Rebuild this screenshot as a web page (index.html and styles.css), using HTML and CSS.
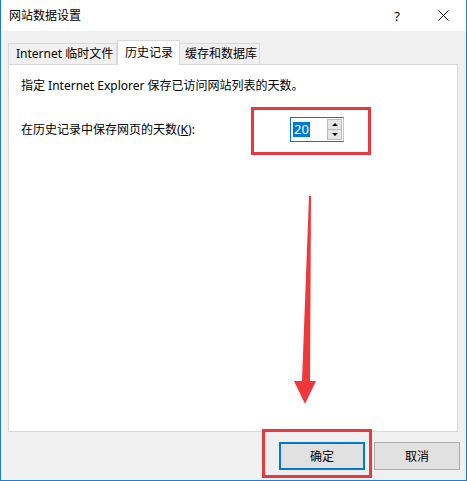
FILE: index.html
```html
<!DOCTYPE html>
<html lang="zh-CN">
<head>
<meta charset="utf-8">
<title>网站数据设置</title>
<link rel="stylesheet" href="styles.css">
</head>
<body>
<div class="window">
  <div class="titlebar">
    <span class="title">网站数据设置</span>
    <span class="capbtn help">?</span>
    <span class="capbtn close"><svg width="11" height="11" viewBox="0 0 11 11"><path d="M0.5 0.5 L10.5 10.5 M10.5 0.5 L0.5 10.5" stroke="#000" stroke-width="1" fill="none"/></svg></span>
  </div>
  <div class="tabs">
    <div class="tab t1">Internet 临时文件</div>
    <div class="tab t2 active">历史记录</div>
    <div class="tab t3">缓存和数据库</div>
  </div>
  <div class="panel">
    <p class="desc">指定 Internet Explorer 保存已访问网站列表的天数。</p>
    <div class="row">
      <label class="lbl">在历史记录中保存网页的天数(<u>K</u>):</label>
      <div class="spin">
        <div class="spin-text"><span class="sel">20</span></div>
        <div class="spin-btns">
          <div class="sb up"><i></i></div>
          <div class="sb down"><i></i></div>
        </div>
      </div>
    </div>
  </div>
  <div class="buttons">
    <button class="btn default">确定</button>
    <button class="btn">取消</button>
  </div>
</div>
<div class="mark box1"></div>
<div class="mark box2"></div>
<svg class="arrow" width="467" height="481" viewBox="0 0 467 481">
  <polygon points="309,196 311,196 310,381 316,381 305,404 294,381 302,381" fill="#f0383a"/>
</svg>
</body>
</html>
```
FILE: styles.css
```css
html, body {
  margin: 0;
  padding: 0;
}
body {
  position: relative;
  width: 467px;
  height: 481px;
  font-family: "Noto Sans", "Noto Sans CJK SC", sans-serif;
  font-size: 12px;
  color: #000;
  background: #f0f0f0;
}
.window {
  box-sizing: border-box;
  width: 467px;
  height: 481px;
  border-left: 1px solid #1a7fd4;
  border-right: 1px solid #1a7fd4;
  border-bottom: 1px solid #1a7fd4;
  background: #f0f0f0;
}
.titlebar {
  height: 31px;
  background: #fff;
  display: flex;
  align-items: center;
  padding-left: 8px;
}
.title {
  flex: 1;
  line-height: 16px;
}
.capbtn {
  width: 46px;
  height: 31px;
  display: flex;
  align-items: center;
  justify-content: center;
}
.help {
  font-size: 13px;
}
.tabs {
  display: flex;
  align-items: flex-end;
  height: 24px;
  margin-top: 9px;
  padding-left: 7px;
  position: relative;
  z-index: 1;
}
.tab {
  box-sizing: border-box;
  height: 21px;
  border: 1px solid #d9d9d9;
  border-bottom: none;
  background: #f0f0f0;
  line-height: 19px;
  padding-left: 7px;
  white-space: nowrap;
}
.tab + .tab {
  border-left: none;
}
.t1 { width: 109px; }
.t2 { width: 63px; }
.t3 { width: 80px; padding-left: 5px; }
.tab.active {
  height: 25px;
  margin-bottom: -1px;
  background: #fff;
  line-height: 23px;
  border-left: 1px solid #d9d9d9;
}
.panel {
  box-sizing: border-box;
  height: 368px;
  margin: 0 8px 0 7px;
  border: 1px solid #d9d9d9;
  background: #fff;
  padding: 13px 12px 0;
}
.desc {
  margin: 0;
  line-height: 16px;
  white-space: nowrap;
}
.row {
  display: flex;
  align-items: center;
  margin-top: 23px;
}
.lbl {
  width: 269px;
  line-height: 16px;
}
.spin {
  box-sizing: border-box;
  width: 54px;
  height: 25px;
  border: 1px solid #0078d7;
  border-right-color: #c4c4c4;
  display: flex;
}
.spin-text {
  flex: 1;
  padding-left: 2px;
  display: flex;
  align-items: center;
}
.sel {
  background: #0078d7;
  color: #fff;
  font-size: 13px;
  line-height: 15px;
  padding: 0 1px;
}
.spin-btns {
  width: 15px;
  margin: 1px 1px 1px 0;
  display: flex;
  flex-direction: column;
}
.sb {
  flex: 1;
  box-sizing: border-box;
  background: #e5e5e5;
  border: 1px solid #bcbcbc;
  display: flex;
  align-items: center;
  justify-content: center;
}
.sb + .sb {
  border-top: none;
}
.sb i {
  width: 0;
  height: 0;
  border-left: 3px solid transparent;
  border-right: 3px solid transparent;
}
.up i { border-bottom: 3px solid #000; }
.down i { border-top: 3px solid #000; }
.buttons {
  display: flex;
  justify-content: flex-end;
  gap: 9px;
  margin-top: 10px;
  padding-right: 6px;
}
.btn {
  box-sizing: border-box;
  width: 86px;
  height: 28px;
  background: #e1e1e1;
  border: 1px solid #adadad;
  font-family: "Noto Sans", "Noto Sans CJK SC", sans-serif;
  font-size: 12px;
  color: #000;
  padding: 0;
}
.btn.default {
  border: 2px solid #0078d7;
}
.mark {
  position: absolute;
  box-sizing: border-box;
  border: 3px solid #e63a40;
}
.box1 {
  left: 251px;
  top: 107px;
  width: 120px;
  height: 48px;
}
.box2 {
  left: 262px;
  top: 429px;
  width: 110px;
  height: 49px;
}
.arrow {
  position: absolute;
  left: 0;
  top: 0;
  pointer-events: none;
}
```
